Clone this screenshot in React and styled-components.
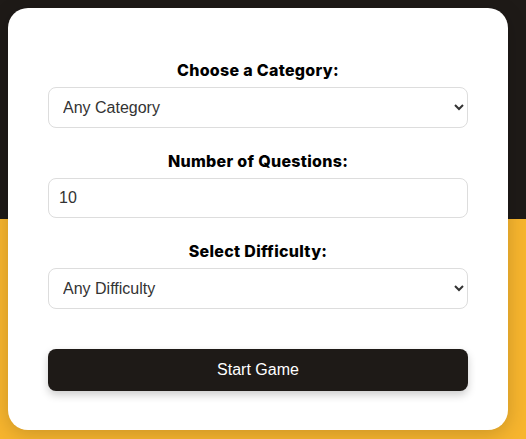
import React from "react";
import styled, { createGlobalStyle } from "styled-components";

const GlobalStyle = createGlobalStyle`
  html, body { margin: 0; padding: 0; }
  body {
    min-height: 439px;
    background: linear-gradient(to bottom, #1e1a17 0, #1e1a17 50%, #f7b52e 50%, #f7b52e 100%);
    font-family: "Liberation Sans", Arial, sans-serif;
  }
`;

const Page = styled.div`
  padding: 8px;
  height: 439px;
  box-sizing: border-box;
`;

const Card = styled.div`
  width: 500px;
  box-sizing: border-box;
  background: #fff;
  border-radius: 20px;
  box-shadow: 0 4px 20px rgba(0, 0, 0, 0.18);
  padding: 52px 40px 39px;
  display: flex;
  flex-direction: column;
`;

const Group = styled.div`
  display: flex;
  flex-direction: column;
  margin-bottom: ${(p) => p.$mb}px;
`;

const Label = styled.label`
  font-family: "Inter", "Noto Sans", sans-serif;
  font-weight: 800;
  font-size: 16px;
  letter-spacing: 0.3px;
  line-height: 20px;
  color: #000;
  text-align: center;
  margin-bottom: 7px;
`;

const fieldCss = `
  box-sizing: border-box;
  width: 100%;
  border: 1px solid #ddd;
  border-radius: 8px;
  padding: 0 10px;
  font-family: "Liberation Sans", Arial, sans-serif;
  font-size: 16px;
  color: #333;
  background: #fff;
  outline: none;
`;

const Select = styled.select`
  ${fieldCss}
  height: 41px;
`;

const Input = styled.input`
  ${fieldCss}
  height: 40px;
`;

const Button = styled.button`
  height: 42px;
  width: 100%;
  border: none;
  border-radius: 8px;
  background: #1e1a17;
  color: #fff;
  font-family: "Liberation Sans", Arial, sans-serif;
  font-size: 16px;
  box-shadow: 0 4px 8px rgba(0, 0, 0, 0.2);
  cursor: pointer;
`;

export default function App() {
  return (
    <>
      <GlobalStyle />
      <Page>
        <Card>
          <Group $mb={23}>
            <Label>Choose a Category:</Label>
            <Select defaultValue="any">
              <option value="any">Any Category</option>
            </Select>
          </Group>
          <Group $mb={23}>
            <Label>Number of Questions:</Label>
            <Input type="number" defaultValue={10} />
          </Group>
          <Group $mb={40}>
            <Label>Select Difficulty:</Label>
            <Select defaultValue="any">
              <option value="any">Any Difficulty</option>
            </Select>
          </Group>
          <Button>Start Game</Button>
        </Card>
      </Page>
    </>
  );
}
